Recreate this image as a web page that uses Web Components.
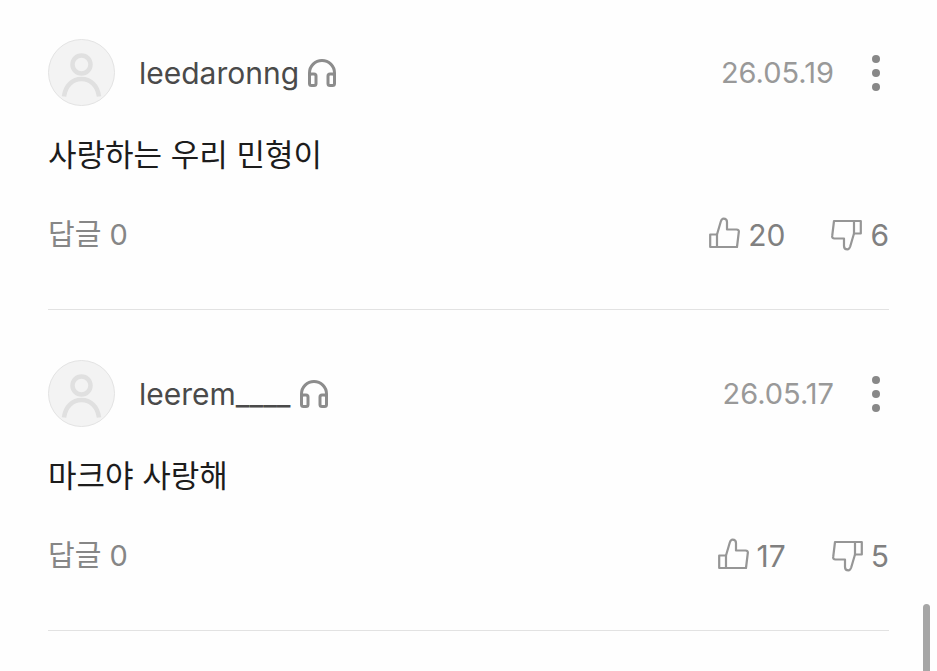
<!DOCTYPE html>
<html lang="ko">
<head>
<meta charset="utf-8">
<meta name="viewport" content="width=device-width, initial-scale=1">
<title>댓글</title>
<style>
    html, body {
        margin: 0;
        height: 100%;
        overflow: hidden;
        background: #fefefe;
    }
    body {
        font-family: Inter, "Noto Sans CJK KR", sans-serif;
    }
</style>
</head>
<body>
<comment-list>
    <comment-item user="leedaronng" date="26.05.19" replies="0" likes="20" dislikes="6">사랑하는 우리 민형이</comment-item>
    <comment-item user="leerem____" date="26.05.17" replies="0" likes="17" dislikes="5">마크야 사랑해</comment-item>
</comment-list>
<scroll-thumb></scroll-thumb>

<script>
class CommentList extends HTMLElement {
    constructor() {
        super();
        this.attachShadow({mode: "open"}).innerHTML = `
        <style>
        :host {
            display: block;
            padding: 0 48px; }
        ::slotted(comment-item) {
            padding: 50px 0 54px; }
        ::slotted(comment-item:first-of-type) {
            padding-top: 39px; }
        </style>
        <slot></slot>
        `;
    }
}

class UserAvatar extends HTMLElement {
    constructor() {
        super();
        this.attachShadow({mode: "open"}).innerHTML = `
        <style>
        :host {
            display: block;
            flex: none;
            width: 67px;
            height: 67px; }
        svg {
            display: block; }
        </style>
        <svg width="67" height="67" viewBox="0 0 67 67" fill="none" aria-hidden="true">
            <circle cx="33.5" cy="33.5" r="33" fill="#f3f3f3" stroke="#e3e3e3"/>
            <g stroke="#e0e0e0" stroke-width="4.5">
                <circle cx="33.5" cy="25.5" r="9"/>
                <path d="M16 57.5C17.500 46.500 24.500 40 33.500 40S49.500 46.500 51 57.500"/>
            </g>
        </svg>
        `;
    }
}

class HeadphoneBadge extends HTMLElement {
    constructor() {
        super();
        this.attachShadow({mode: "open"}).innerHTML = `
        <style>
        :host {
            display: block;
            flex: none; }
        svg {
            display: block; }
        </style>
        <svg width="28" height="28" viewBox="0 0 28 28" fill="none" stroke="#8c8c8c" stroke-width="3" aria-hidden="true">
            <path d="M1.500 18V14a12.500 12.500 0 0 1 25 0v4"/>
            <rect x="1.5" y="15" width="6.5" height="11.5" rx="2"/>
            <rect x="20" y="15" width="6.5" height="11.5" rx="2"/>
        </svg>
        `;
    }
}

class VoteButton extends HTMLElement {
    constructor() {
        super();
        this.attachShadow({mode: "open"}).innerHTML = `
        <style>
        :host {
            display: block; }
        button {
            display: flex;
            align-items: center;
            gap: 8px;
            padding: 0;
            border: 0;
            background: none;
            color: #808080;
            font: inherit;
            cursor: pointer; }
        svg {
            display: block;
            margin-bottom: 5px; }
        :host([type="down"]) svg {
            transform: rotate(180deg);
            margin: 0; }
        </style>
        <button type="button" aria-label="${this.getAttribute("type") === "down" ? "싫어요" : "좋아요"}">
            <svg width="31" height="32" viewBox="0 0 31 32" fill="none" stroke="#969696" stroke-width="2.2" stroke-linejoin="round" aria-hidden="true">
                <path d="M8 17.500H1.200V30H8Z"/>
                <path d="M8 17.500L11.800 4.500C12.500 2.500 13.300 1.600 14.500 1.600C16.500 1.600 18 3 18 5V12.500H27.500C29.300 12.500 30.100 13.500 29.800 15L28 30H8"/>
            </svg>
            <slot></slot>
        </button>
        `;
    }
}

class CommentItem extends HTMLElement {
    constructor() {
        super();
        this.attachShadow({mode: "open"});
    }

    connectedCallback() {
        this.render();
    }

    render() {
        this.shadowRoot.innerHTML = `
        <style>
        :host {
            display: block;
            border-bottom: 1px solid #e2e2e2; }
        header, footer {
            display: flex;
            align-items: center; }
        .user {
            margin-left: 24px;
            color: #4a4a4a;
            font-size: 30px;
            line-height: 40px; }
        headphone-badge {
            margin-left: 9px; }
        time {
            margin-left: auto;
            color: #999;
            font-size: 29px;
            line-height: 40px; }
        .more {
            display: block;
            margin-left: 29px;
            padding: 0 9px;
            border: 0;
            background: none;
            cursor: pointer; }
        .more svg {
            display: block; }
        p {
            margin: 25px 0 0;
            color: #1c1c1c;
            font-size: 31px;
            line-height: 48px; }
        footer {
            height: 40px;
            margin-top: 36px;
            font-size: 29px;
            line-height: 40px; }
        .replies {
            margin-right: auto;
            padding: 0;
            border: 0;
            background: none;
            color: #868686;
            font: inherit;
            cursor: pointer; }
        vote-button {
            font-size: 30px; }
        vote-button + vote-button {
            margin-left: 46px; }
        </style>

        <header>
            <user-avatar></user-avatar>
            <span class="user">${this.getAttribute("user")}</span>
            <headphone-badge></headphone-badge>
            <time>${this.getAttribute("date")}</time>
            <button class="more" type="button" aria-label="더보기">
                <svg width="8" height="36" viewBox="0 0 8 36" fill="#888" aria-hidden="true">
                    <circle cx="4" cy="4" r="4"/>
                    <circle cx="4" cy="18" r="4"/>
                    <circle cx="4" cy="32" r="4"/>
                </svg>
            </button>
        </header>
        <p><slot></slot></p>
        <footer>
            <button class="replies" type="button">답글 ${this.getAttribute("replies")}</button>
            <vote-button type="up">${this.getAttribute("likes")}</vote-button>
            <vote-button type="down">${this.getAttribute("dislikes")}</vote-button>
        </footer>
        `;
    }
}

class ScrollThumb extends HTMLElement {
    constructor() {
        super();
        this.attachShadow({mode: "open"}).innerHTML = `
        <style>
        :host {
            display: block;
            position: fixed;
            top: 90%;
            right: 7px;
            bottom: 0;
            width: 7px;
            border-radius: 4px 4px 0 0;
            background: #a6a6a6; }
        </style>
        `;
    }
}

customElements.define("user-avatar", UserAvatar);
customElements.define("headphone-badge", HeadphoneBadge);
customElements.define("vote-button", VoteButton);
customElements.define("comment-item", CommentItem);
customElements.define("comment-list", CommentList);
customElements.define("scroll-thumb", ScrollThumb);
</script>
</body>
</html>
